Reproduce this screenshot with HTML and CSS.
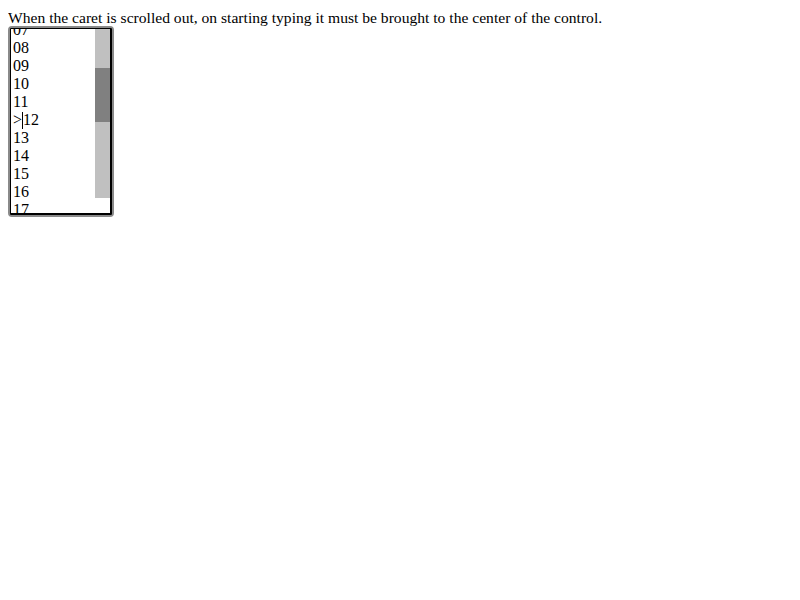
FILE: index.html
```html
<!DOCTYPE html>
<html>
<head>
<meta charset="utf-8">
<link rel="stylesheet" href="styles.css">
</head>
<body>
<div class="note">When the caret is scrolled out, on starting typing it must be brought to the center of the control.</div>
<div class="ring">
  <div class="frame">
    <div class="view">
      <div class="lines">
        <div class="line">01</div>
        <div class="line">02</div>
        <div class="line">03</div>
        <div class="line">04</div>
        <div class="line">05</div>
        <div class="line">06</div>
        <div class="line">07</div>
        <div class="line">08</div>
        <div class="line">09</div>
        <div class="line">10</div>
        <div class="line">11</div>
        <div class="line">&gt;<span class="caret"></span>12</div>
        <div class="line">13</div>
        <div class="line">14</div>
        <div class="line">15</div>
        <div class="line">16</div>
        <div class="line">17</div>
        <div class="line">18</div>
      </div>
    </div>
    <div class="scrollbar">
      <div class="track">
        <div class="seg" style="height:39px"></div>
        <div class="thumb" style="height:54px"></div>
      </div>
      <div class="corner"></div>
    </div>
  </div>
</div>
</body>
</html>
```

FILE: styles.css
```css
html, body {
  margin: 0;
  padding: 0;
  background: #fff;
}
body {
  margin: 8px;
  font-family: "Liberation Serif", "Times New Roman", serif;
  font-size: 16px;
  line-height: 18px;
  color: #000;
}
.note {
  height: 18px;
  line-height: 20px;
  font-size: 15.6px;
  white-space: nowrap;
}
.ring {
  width: 102px;
  height: 187px;
  border: 2px solid #8a8a8a;
  border-radius: 4px;
  display: flex;
}
.frame {
  flex: 1;
  display: flex;
  border-style: solid;
  border-color: #000;
  border-width: 1px 2px 2px 1px;
  border-radius: 1px;
  overflow: hidden;
}
.view {
  flex: 1;
  overflow: hidden;
  padding-left: 2px;
}
.lines {
  margin-top: -116px;
}
.line {
  height: 18px;
  white-space: nowrap;
}
.caret {
  display: inline-block;
  width: 1px;
  height: 17px;
  background: #000;
  vertical-align: -4px;
}
.scrollbar {
  width: 15px;
  display: flex;
  flex-direction: column;
}
.track {
  height: 169px;
  background: #c0c0c0;
}
.thumb {
  background: #808080;
}
.corner {
  flex: 1;
  background: #fff;
}
```
